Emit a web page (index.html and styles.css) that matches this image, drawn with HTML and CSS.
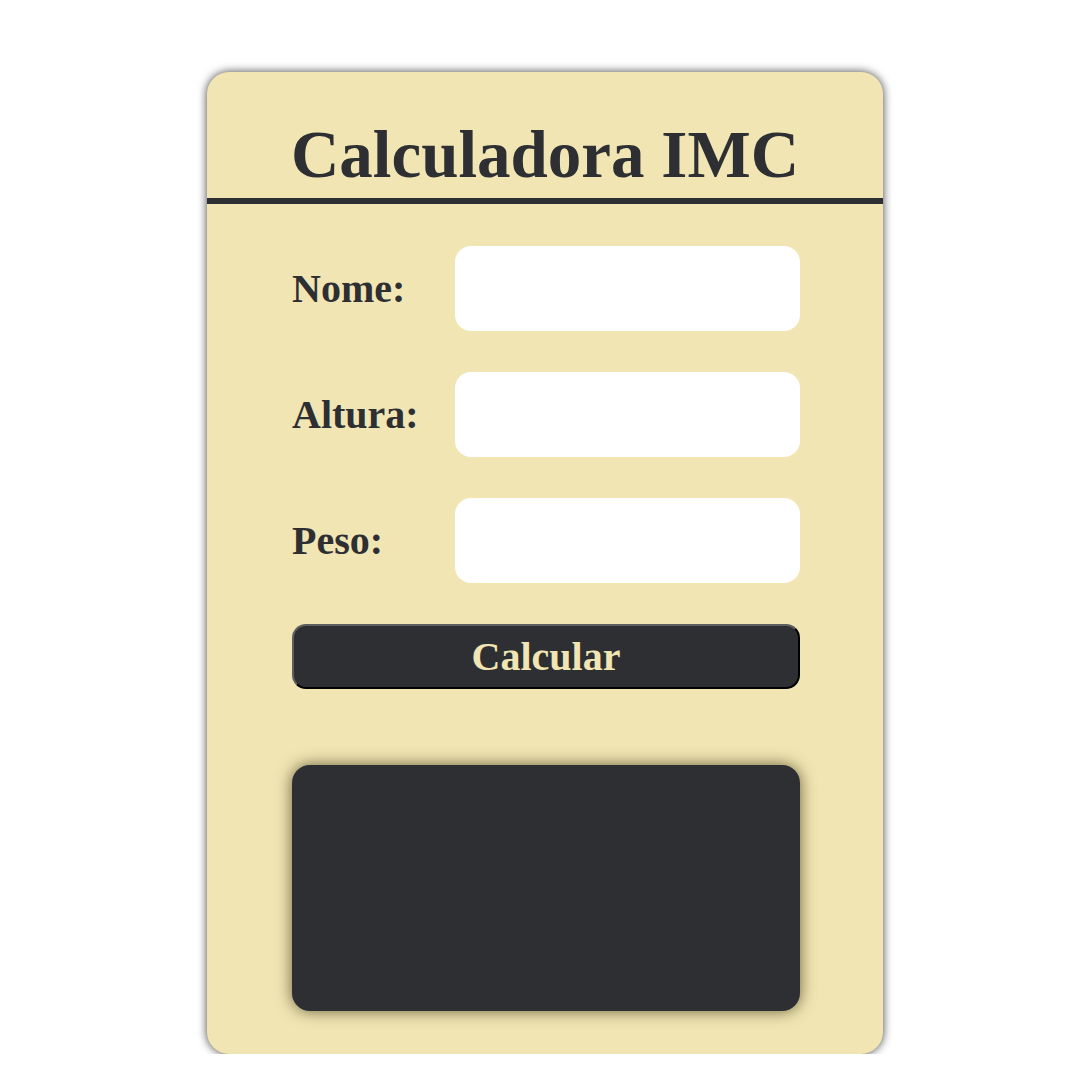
FILE: index.html
```
<!DOCTYPE html>
<html lang="pt-BR">
<head>
    <meta charset="UTF-8">
    <meta name="viewport" content="width=device-width, initial-scale=1.0">
    <title>Calculadora IMC</title>
    <link rel="stylesheet" href="styles.css">
</head>
<body>
    <section class="container">
        <h1 class="title">Calculadora IMC</h1>
        <form class="form">
            <div class="row">
                <label for="nome">Nome:</label>
                <input type="text" id="nome">
            </div>
            <div class="row">
                <label for="altura">Altura:</label>
                <input type="text" id="altura">
            </div>
            <div class="row">
                <label for="peso">Peso:</label>
                <input type="text" id="peso">
            </div>
            <button type="button" id="calcular">Calcular</button>
            <div id="resultado"></div>
        </form>
    </section>
</body>
</html>
```

FILE: styles.css
```
body {
    font-family: "Liberation Serif", "Times New Roman", serif;
    margin: 0;
    padding: 72px 0 0 10px;
    background-color: #ffffff;
    color: #2e2f33;
}

.container {
    width: 676px;
    margin: 0 auto;
    padding: 49px 0 43px;
    background-color: #f1e6b3;
    border-radius: 22px;
    box-shadow: 0 0 10px rgba(0, 0, 0, 0.75);
}

.title {
    margin: 0;
    padding-bottom: 10px;
    font-size: 67px;
    line-height: 1;
    text-align: center;
    border-bottom: 6px solid #2e2f33;
}

.form {
    display: flex;
    flex-direction: column;
    gap: 41px;
    padding: 42px 83px 0 85px;
}

.row {
    display: flex;
    align-items: center;
}

.row label {
    width: 163px;
    font-size: 40px;
    font-weight: bold;
    line-height: 1;
}

.row input {
    width: 345px;
    height: 85px;
    box-sizing: border-box;
    border: none;
    border-radius: 16px;
    background-color: #ffffff;
    font-size: 24px;
    padding: 0 16px;
}

#calcular {
    height: 65px;
    border-style: solid;
    border-width: 2px;
    border-color: #5e5e5e #000000 #000000 #5e5e5e;
    border-radius: 14px;
    background-color: #2e2f33;
    color: #f1e6b3;
    font-family: "Liberation Serif", "Times New Roman", serif;
    font-size: 40px;
    font-weight: bold;
    line-height: 1;
    padding: 0;
}

#resultado {
    height: 246px;
    margin-top: 35px;
    background-color: #2e2f33;
    border-radius: 18px;
    box-shadow: 0 0 16px rgba(60, 50, 20, 0.75);
}
```
